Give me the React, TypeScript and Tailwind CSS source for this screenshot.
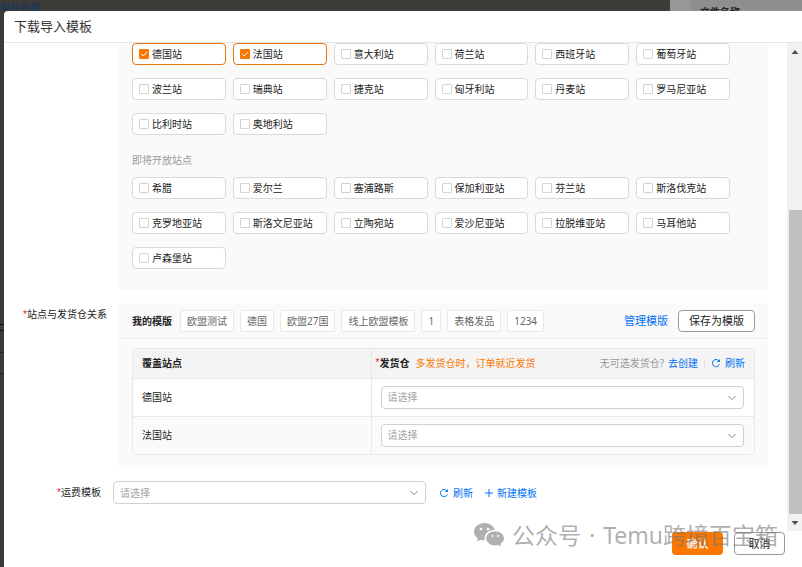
import { useState } from "react";

const openSites = [
  "德国站", "法国站", "意大利站", "荷兰站", "西班牙站", "葡萄牙站",
  "波兰站", "瑞典站", "捷克站", "匈牙利站", "丹麦站", "罗马尼亚站",
  "比利时站", "奥地利站",
];

const upcomingSites = [
  "希腊", "爱尔兰", "塞浦路斯", "保加利亚站", "芬兰站", "斯洛伐克站",
  "克罗地亚站", "斯洛文尼亚站", "立陶宛站", "爱沙尼亚站", "拉脱维亚站", "马耳他站",
  "卢森堡站",
];

const templates = ["欧盟测试", "德国", "欧盟27国", "线上欧盟模板", "1", "表格发品", "1234"];

interface SiteGridProps {
  sites: string[];
  selected: string[];
  onToggle: (site: string) => void;
}

function SiteGrid({ sites, selected, onToggle }: SiteGridProps) {
  return (
    <div className="grid max-w-[598px] grid-cols-6 gap-x-[7px] gap-y-[13px]">
      {sites.map((site) => {
        const checked = selected.includes(site);
        return (
          <label
            key={site}
            className={`flex h-[22px] items-center gap-[3px] rounded border bg-white px-1.5 whitespace-nowrap ${
              checked ? "border-[#e8760f]" : "border-[#d9d9d9]"
            }`}
          >
            <span className="relative flex size-[10px] shrink-0">
              <input
                type="checkbox"
                checked={checked}
                onChange={() => onToggle(site)}
                className="size-[10px] appearance-none rounded-[1px] border border-[#d4d4d4] bg-white checked:border-[#fb7701] checked:bg-[#fb7701]"
              />
              {checked && (
                <svg viewBox="0 0 10 10" className="pointer-events-none absolute inset-0" fill="none" stroke="#fff">
                  <path d="M2.2 4.9 4.3 7 8 3" />
                </svg>
              )}
            </span>
            {site}
          </label>
        );
      })}
    </div>
  );
}

function Required() {
  return <span className="font-['Liberation_Sans',sans-serif] font-normal text-[#e02020]">*</span>;
}

function Select({ label }: { label: string }) {
  return (
    <div className="relative flex-1">
      <select
        aria-label={label}
        defaultValue=""
        className="block h-[23px] w-full appearance-none rounded border border-[#d0d0d0] bg-white px-1.5 text-[#a3a3a3]"
      >
        <option value="">请选择</option>
      </select>
      <svg
        viewBox="0 0 8 8"
        className="pointer-events-none absolute top-2 right-2 size-2"
        fill="none"
        stroke="#888"
      >
        <path d="M0.5 2 4 5.7 7.5 2" />
      </svg>
    </div>
  );
}

function RefreshButton() {
  return (
    <button className="flex items-center gap-1 text-[#0071f3]">
      <svg viewBox="0 0 10 10" className="size-[10px]" fill="none" stroke="currentColor">
        <path d="M8.4 6.4A3.6 3.6 0 1 1 7.8 2.8" />
        <path d="M8.9 1v3H5.900z" fill="currentColor" stroke="none" />
      </svg>
      刷新
    </button>
  );
}

export default function App() {
  const [selected, setSelected] = useState<string[]>(["德国站", "法国站"]);

  const toggleSite = (site: string) => {
    setSelected((prev) =>
      prev.includes(site) ? prev.filter((s) => s !== site) : [...prev, site]
    );
  };

  return (
    <div className="relative flex h-screen flex-col overflow-hidden bg-[#3d3b38] font-['Noto_Sans','Noto_Sans_CJK_SC',sans-serif] text-[10px] leading-4 text-[#222]">
      {/* Dimmed page behind the dialog */}
      <div className="flex h-[11px] shrink-0 overflow-hidden">
        <span className="flex-1 text-[#0d3768]">邮件处理</span>
        <div className="w-5 bg-[#979797]" />
        <div className="w-28 bg-[#8f8f8f] pt-1 pl-[10px] font-bold">文件名称</div>
      </div>

      <div className="flex min-h-0 flex-1">
        {/* Row lines of the table under the overlay */}
        <div className="flex w-1 shrink-0 flex-col pt-[313px]">
          <div className="h-[7px] border-y border-[#151413]" />
          <div className="mt-[21px] h-[22px] border-y border-[#24221f]" />
        </div>

        <div className="flex min-w-0 flex-1 flex-col rounded-tl bg-white">
          {/* Header */}
          <header className="flex h-8 shrink-0 items-center border-b border-[#e5e5e5] px-2.5 pb-px">
            <h1 className="text-[13px] text-[#333]">下载导入模板</h1>
          </header>

          <div className="flex min-h-0 flex-1">
            <main className="flex min-w-0 flex-1 flex-col overflow-hidden pr-[19px]">
              {/* Site picker */}
              <section className="ml-[115px] bg-[#fafafa] px-[13px] pb-[21px]">
                <SiteGrid sites={openSites} selected={selected} onToggle={toggleSite} />
                <p className="mt-[17px] mb-[9px] text-[#999]">即将开放站点</p>
                <SiteGrid sites={upcomingSites} selected={selected} onToggle={toggleSite} />
              </section>

              {/* Site and warehouse mapping */}
              <section className="mt-[13px] flex">
                <h2 className="w-[115px] pt-[3px] pr-3 text-right">
                  <Required />站点与发货仓关系
                </h2>
                <div className="min-w-0 flex-1 bg-[#fafafa] pb-[13px]">
                  <div className="flex h-9 items-center gap-1.5 border-b border-[#ececec] px-[13px]">
                    <strong className="mr-0.5">我的模版</strong>
                    {templates.map((name) => (
                      <button key={name} className="h-[22px] rounded-xs border border-[#e8e8e8] bg-white px-1.5 text-[#666]">
                        {name}
                      </button>
                    ))}
                    <button className="ml-auto text-[11px] text-[#0071f3]">管理模版</button>
                    <button className="ml-1 h-[22px] rounded border border-[#999] bg-white px-2.5 text-[11px]">
                      保存为模版
                    </button>
                  </div>

                  <div className="mx-[13px] mt-[9px] overflow-hidden rounded border border-[#e8e8e8]">
                    <table className="w-full border-collapse text-left">
                      <thead className="bg-[#f4f4f4]">
                        <tr className="h-[29px]">
                          <th className="w-[238px] px-[9px]">覆盖站点</th>
                          <th className="border-l border-[#e8e8e8] pr-[9px] pl-1 font-normal">
                            <div className="flex items-center">
                              <Required />
                              <strong>发货仓</strong>
                              <span className="ml-1.5 text-[#fb7701]">多发货仓时，订单就近发货</span>
                              <span className="ml-auto text-[#999]">无可选发货仓?</span>
                              <a href="#create" className="ml-1 text-[#0071f3]">去创建</a>
                              <span className="mx-1.5 h-2 w-px bg-[#ddd]" />
                              <RefreshButton />
                            </div>
                          </th>
                        </tr>
                      </thead>
                      <tbody>
                        {["德国站", "法国站"].map((site) => (
                          <tr key={site} className="h-[38px] border-t border-[#e8e8e8] odd:bg-white even:bg-[#fafafa]">
                            <td className="px-[9px]">{site}</td>
                            <td className="border-l border-[#e8e8e8] pr-2.5 pl-[9px]">
                              <Select label={`${site}发货仓`} />
                            </td>
                          </tr>
                        ))}
                      </tbody>
                    </table>
                  </div>
                </div>
              </section>

              {/* Freight template */}
              <section className="mt-[13px] flex items-center">
                <h2 className="w-[109px] pr-3 text-right">
                  <Required />运费模板
                </h2>
                <div className="flex w-[313px]">
                  <Select label="运费模板" />
                </div>
                <div className="ml-[13px] flex items-center gap-3">
                  <RefreshButton />
                  <button className="flex items-center gap-1 text-[#0071f3]">
                    <svg viewBox="0 0 8 8" className="size-2" stroke="currentColor">
                      <path d="M4 0v8M0 4h8" />
                    </svg>
                    新建模板
                  </button>
                </div>
              </section>
            </main>

            {/* Scrollbar */}
            <div className="flex w-[15px] shrink-0 flex-col bg-[#f1f1f1]">
              <svg viewBox="0 0 15 17" className="h-[17px]" fill="#505050">
                <path d="M4.500 11 8 7 11.500 11z" />
              </svg>
              <div className="flex flex-1 flex-col justify-end pl-0.5">
                <div className="h-[67%] bg-[#c1c1c1]" />
              </div>
              <svg viewBox="0 0 15 17" className="h-[17px]" fill="#505050">
                <path d="M4.500 7 8 11 11.500 7z" />
              </svg>
            </div>
          </div>

          {/* Footer */}
          <footer className="flex h-9 shrink-0 items-start justify-end gap-[11px] pt-px pr-[17px]">
            <button className="h-[23px] w-[51px] rounded bg-[#fb7701] text-[11px] font-medium text-white">确认</button>
            <button className="h-[23px] w-[51px] rounded border border-[#999] bg-white text-[11px]">取消</button>
          </footer>
        </div>
      </div>

      {/* Watermark */}
      <div className="pointer-events-none absolute right-6 bottom-4 flex items-center gap-2 text-[23px] leading-8 text-[#777]/60">
        <svg viewBox="0 0 30 24" className="h-6 w-[30px]" fill="#b0b0b0">
          <path d="M10.5 0C4.700 0 0 3.900 0 8.700c0 2.700 1.500 5.100 3.900 6.700l-1 3 3.500-1.700c1.300.4 2.700.6 4.100.6h.4A7 7 0 0 1 10.600 15c0-4.500 4.300-8 9.500-8h.7C19.700 3 15.500 0 10.500 0z" />
          <path d="M30 15.300c0-3.900-4-7.100-8.900-7.100s-8.900 3.200-8.900 7.100 4 7.100 8.900 7.100c1 0 2-.1 3-.4l2.900 1.500-.8-2.500c2.300-1.300 3.800-3.400 3.800-5.700z" />
          <g fill="#fff">
            <circle cx="7" cy="6" r="1.300" />
            <circle cx="14" cy="6" r="1.300" />
            <circle cx="18.300" cy="13" r="1.100" />
            <circle cx="24" cy="13" r="1.100" />
          </g>
        </svg>
        <span>公众号</span>
        <span>·</span>
        <span>Temu跨境百宝箱</span>
      </div>
    </div>
  );
}
